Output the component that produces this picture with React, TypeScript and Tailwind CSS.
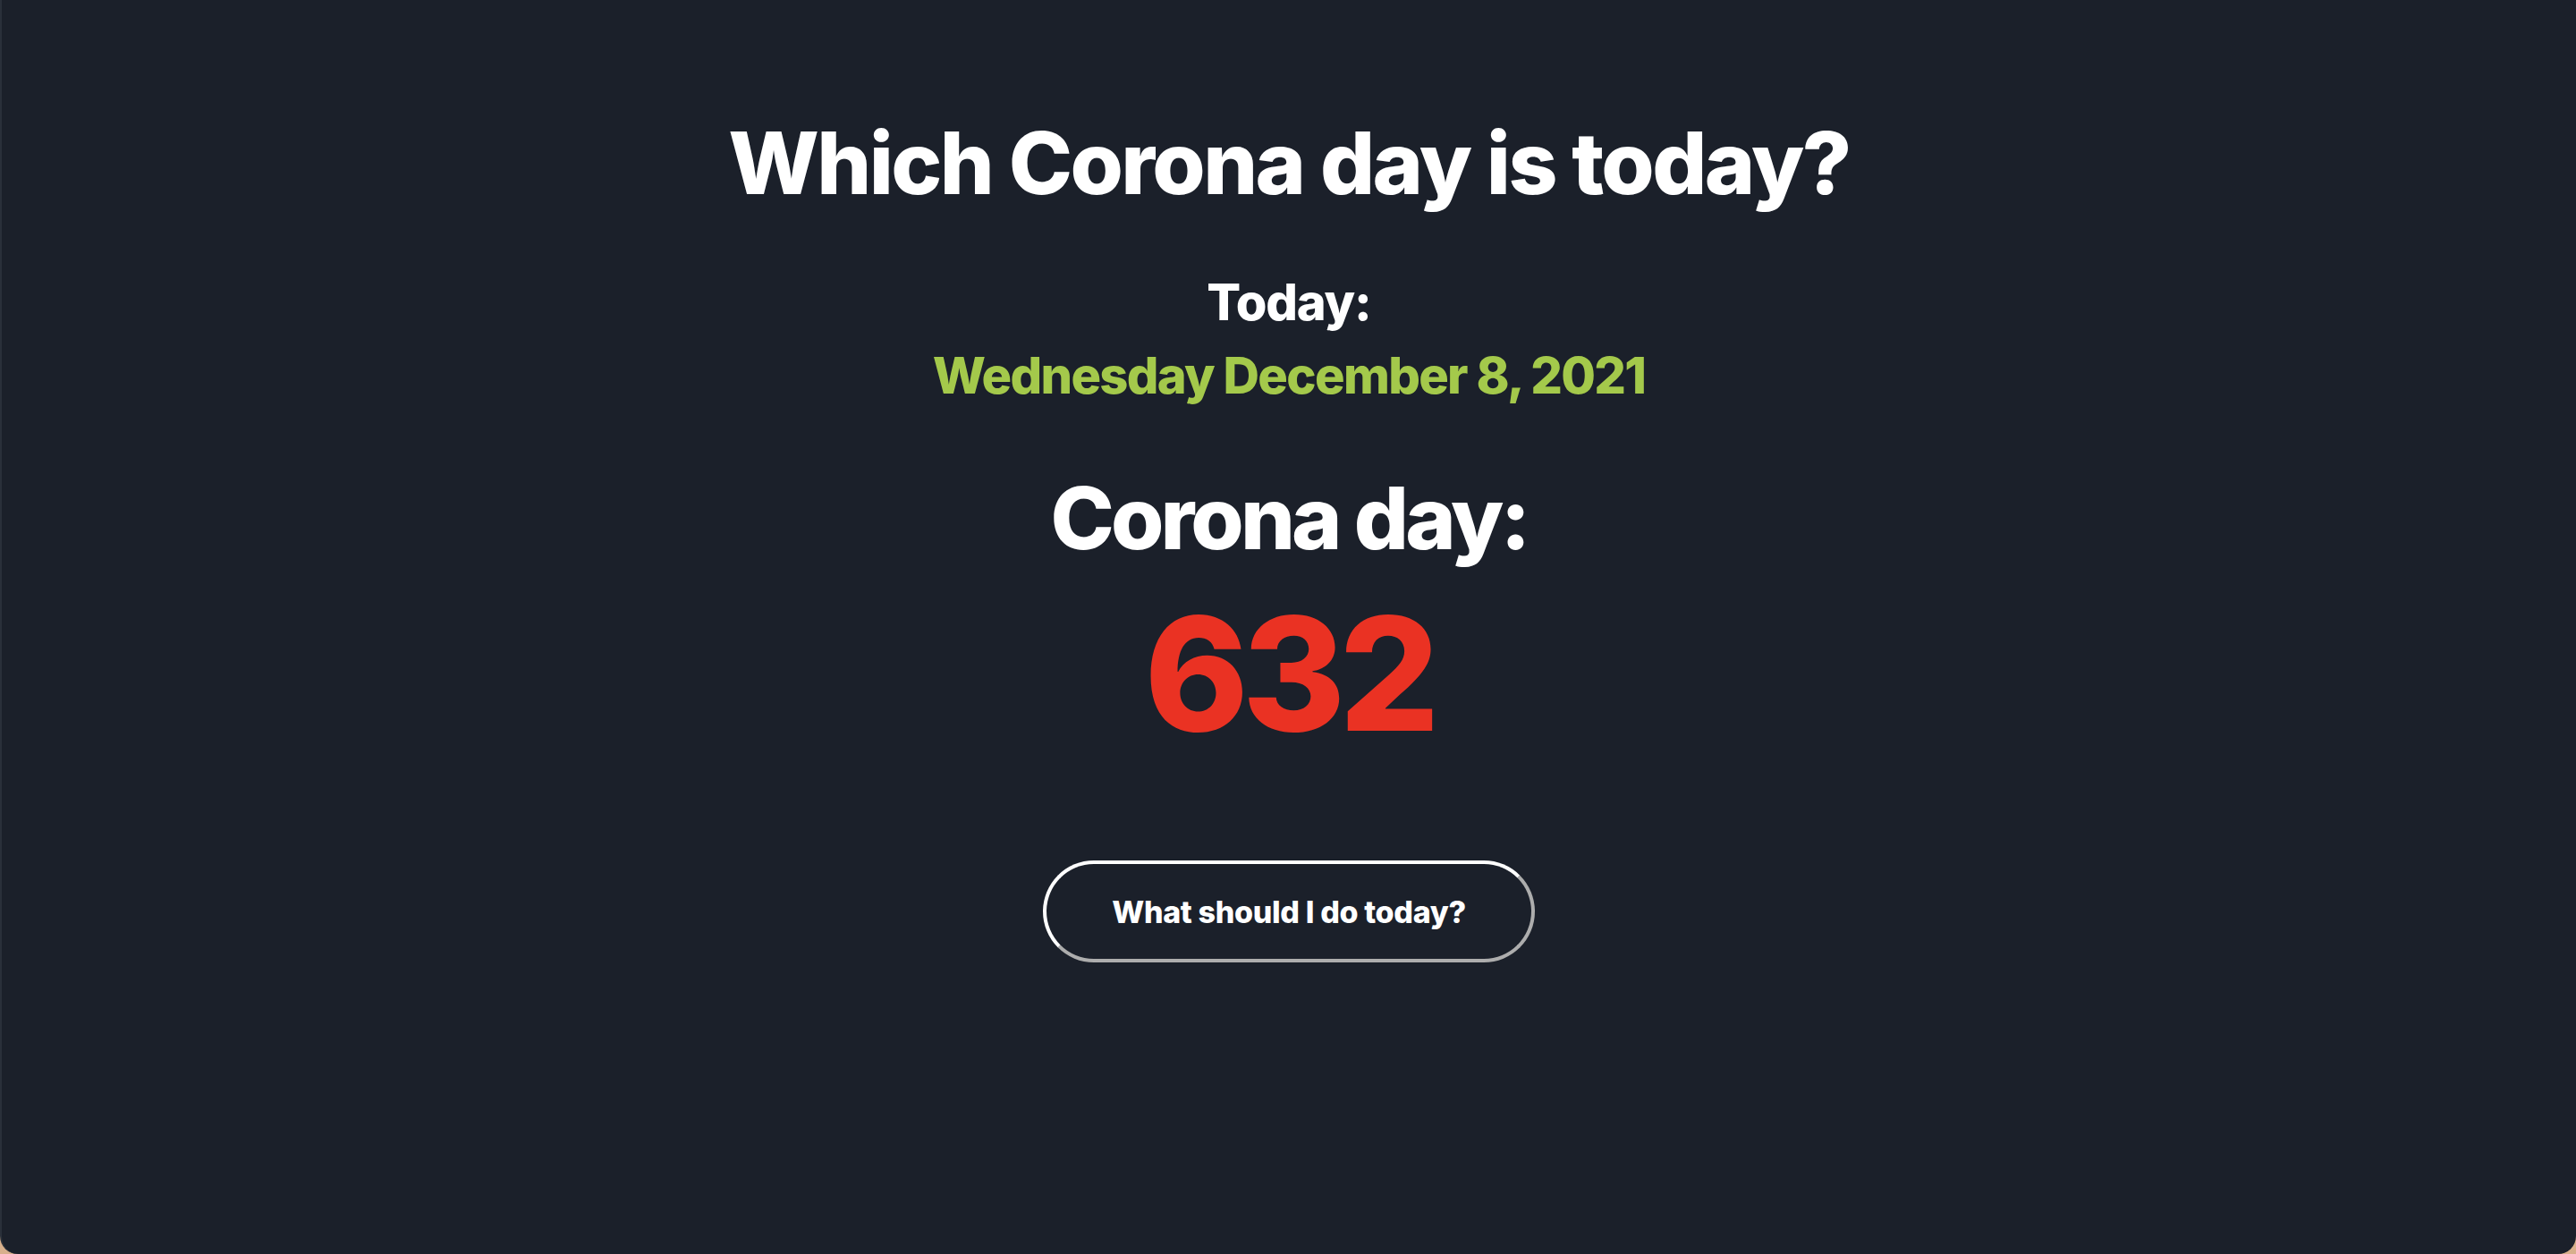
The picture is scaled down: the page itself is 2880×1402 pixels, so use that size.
export default function App() {
  return (
    <div className="h-screen w-full bg-[#d8b08c]">
      <div className="h-full w-full rounded-b-[20px] border-l-2 border-[#2a303a] bg-[#1b202a] flex flex-col items-center text-white [font-family:Inter,'Noto_Sans',sans-serif]">
        <h1 className="mt-[134px] text-[96px] leading-none font-extrabold tracking-[-0.027em]">
          Which Corona day is today?
        </h1>

        <p className="mt-[80px] text-[56px] leading-none font-extrabold tracking-[-0.02em]">Today:</p>
        <p className="mt-[26px] text-[56px] leading-none font-extrabold tracking-[-0.03em] text-[#a4c94b]">
          Wednesday December 8, 2021
        </p>

        <h2 className="mt-[83px] text-[96px] leading-none font-extrabold tracking-[-0.04em]">Corona day:</h2>
        <p className="mt-[38px] text-[176px] leading-none font-extrabold tracking-[-0.04em] text-[#ea3223]">632</p>

        <button className="mt-[121px] w-[550px] h-[114px] rounded-full border-4 border-t-white border-l-white border-r-[#adadad] border-b-[#adadad] text-[34px] font-extrabold tracking-[-0.01em] text-white">
          What should I do today?
        </button>
      </div>
    </div>
  );
}
